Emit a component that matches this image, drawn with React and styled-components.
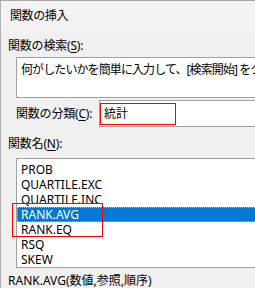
import React from 'react'
import styled, { createGlobalStyle } from 'styled-components'

const GlobalStyle = createGlobalStyle`
  html, body {
    margin: 0;
    padding: 0;
    background: #f0f0f0;
  }
`

const fontStack = `"Noto Sans", "Noto Sans CJK JP", sans-serif`

const Dialog = styled.div`
  width: 255px;
  height: 288px;
  box-sizing: border-box;
  overflow: hidden;
  background: #f0f0f0;
  border-top: 1px solid #a8a8a8;
  border-left: 1px solid #b0b0b0;
  font-family: ${fontStack};
  font-size: 12px;
  color: #000;
`

const TitleBar = styled.div`
  height: 30px;
  background: #f3f3f3;
  display: flex;
  align-items: center;
  padding-left: 9px;
  padding-bottom: 2px;
  box-sizing: border-box;
  letter-spacing: -0.4px;
`

const Body = styled.div`
  padding-left: 7px;
  display: flex;
  flex-direction: column;
  width: 320px;
`

const Label = styled.div`
  height: 16px;
  line-height: 16px;
  margin-top: ${p => p.$top || 0}px;
  width: ${p => (p.$width ? `${p.$width}px` : 'auto')};
  flex-shrink: 0;
  white-space: nowrap;
  letter-spacing: -0.2px;
`

const Key = styled.span`
  text-decoration: underline;
  text-underline-offset: 2px;
`

const SearchBox = styled.div`
  margin-left: 8px;
  margin-top: 3px;
  height: 41px;
  box-sizing: border-box;
  border: 1px solid #a0a0a0;
  background: #fff;
  padding: 4px 0 0 4px;
  line-height: 16px;
  white-space: nowrap;
  overflow: hidden;
  letter-spacing: -0.9px;
`

const CategoryRow = styled.div`
  display: flex;
  align-items: center;
  margin-left: 8px;
  margin-top: 2px;
`

const Combo = styled.div`
  flex: 1;
  height: 27px;
  box-sizing: border-box;
  border: 1px solid #a0a0a0;
  background: #fff;
  display: flex;
  align-items: center;
`

const Marked = styled.div`
  width: 76px;
  height: 22px;
  box-sizing: border-box;
  border: 1.5px solid #ff0000;
  padding-left: 3px;
  line-height: 19px;
`

const ListBox = styled.div`
  position: relative;
  margin-left: 8px;
  margin-top: 6px;
  height: 110px;
  box-sizing: border-box;
  border: 1px solid #a0a0a0;
  background: #fff;
  padding-top: 3px;
`

const Item = styled.div`
  height: 15px;
  line-height: 15px;
  padding-left: 4px;
  box-sizing: border-box;
  background: ${p => (p.$selected ? '#0078d7' : 'transparent')};
  color: ${p => (p.$selected ? '#fff' : '#000')};
  outline: ${p => (p.$selected ? '1px dotted #ffffff88' : 'none')};
  outline-offset: -1px;
  white-space: nowrap;
`

const Callout = styled.div`
  position: absolute;
  left: -5px;
  top: 44px;
  width: 91px;
  height: 34px;
  box-sizing: border-box;
  border: 1.5px solid #ff0000;
`

const Syntax = styled.div`
  margin-top: 5px;
  line-height: 16px;
  white-space: nowrap;
`

const functions = ['PROB', 'QUARTILE.EXC', 'QUARTILE.INC', 'RANK.AVG', 'RANK.EQ', 'RSQ', 'SKEW']

export default function App() {
  return (
    <>
      <GlobalStyle />
      <Dialog>
        <TitleBar>関数の挿入</TitleBar>
        <Body>
          <Label $top={7}>関数の検索(<Key>S</Key>):</Label>
          <SearchBox>何がしたいかを簡単に入力して、[検索開始] をクリックしてください。</SearchBox>
          <CategoryRow>
            <Label $width={83}>関数の分類(<Key>C</Key>):</Label>
            <Combo>
              <Marked>統計</Marked>
            </Combo>
          </CategoryRow>
          <Label $top={9}>関数名(<Key>N</Key>):</Label>
          <ListBox>
            {functions.map(name => (
              <Item key={name} $selected={name === 'RANK.AVG'}>{name}</Item>
            ))}
            <Callout />
          </ListBox>
          <Syntax>RANK.AVG(数値,参照,順序)</Syntax>
        </Body>
      </Dialog>
    </>
  )
}
